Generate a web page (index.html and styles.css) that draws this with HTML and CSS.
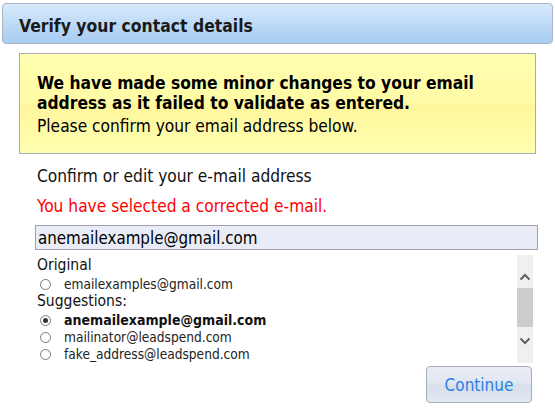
FILE: index.html
```html
<!DOCTYPE html>
<html>
<head>
<meta charset="utf-8">
<link rel="stylesheet" href="styles.css">
</head>
<body>
<div class="header">Verify your contact details</div>
<div class="notice">
  <div class="notice-bold">We have made some minor changes to your email address as it failed to validate as entered.</div>
  <div class="notice-text">Please confirm your email address below.</div>
</div>
<div class="content">
  <div class="label">Confirm or edit your e-mail address</div>
  <div class="error">You have selected a corrected e-mail.</div>
  <div class="input">anemailexample@gmail.com</div>
  <div class="listbox">
    <div class="list">
      <div class="group">Original</div>
      <div class="option first"><span class="radio"></span>emailexamples@gmail.com</div>
      <div class="group">Suggestions:</div>
      <div class="option first selected"><span class="radio checked"></span>anemailexample@gmail.com</div>
      <div class="option"><span class="radio"></span>mailinator@leadspend.com</div>
      <div class="option"><span class="radio"></span>fake_address@leadspend.com</div>
    </div>
    <div class="scrollbar">
      <svg class="arrow" width="16" height="12" viewBox="0 0 16 12"><path d="M3.5 8.5 L8 4 L12.5 8.5" fill="none" stroke="#606060" stroke-width="2"/></svg>
      <div class="track"><div class="thumb"></div></div>
      <svg class="arrow" width="16" height="12" viewBox="0 0 16 12"><path d="M3.5 3.5 L8 8 L12.5 3.5" fill="none" stroke="#606060" stroke-width="2"/></svg>
    </div>
  </div>
  <div class="actions">
    <div class="button">Continue</div>
  </div>
</div>
</body>
</html>
```
FILE: styles.css
```css
html, body {
  margin: 0;
  padding: 0;
  background: #ffffff;
}
body {
  font-family: "DejaVu Sans Condensed", "DejaVu Sans", sans-serif;
  color: #000000;
  width: 555px;
  height: 412px;
  overflow: hidden;
}
.header {
  margin: 3px 2px 0 2px;
  height: 34px;
  padding: 5px 0 0 16px;
  border: 1px solid #a9b6c8;
  border-radius: 4px;
  background: linear-gradient(#d8e9fb, #bcd9f6 55%, #a8ccf2);
  display: flex;
  align-items: center;
  font-weight: bold;
  font-size: 17.4px;
  line-height: 20px;
  color: #1a1a1a;
}
.notice {
  margin: 9px 19px 0 19px;
  height: 80px;
  border: 1px solid #a8a8b8;
  background: linear-gradient(#ffffb0, #fffba6 48%, #fff69c 52%, #ffffb0);
  padding: 19px 17px 0 17px;
  font-size: 17.2px;
  line-height: 19px;
}
.notice-bold {
  font-weight: bold;
  font-size: 17.3px;
  line-height: 20px;
}
.notice-text {
  margin-top: 4px;
}
.content {
  margin-left: 35px;
  width: 503px;
}
.label {
  margin-top: 12px;
  padding-left: 2px;
  font-size: 17.2px;
  line-height: 20px;
  color: #111111;
}
.error {
  margin-top: 10px;
  padding-left: 2px;
  font-size: 17.2px;
  line-height: 20px;
  color: #ff0000;
}
.input {
  margin-top: 9px;
  height: 23px;
  border: 1px solid #a0a0ae;
  background: #e9ecf6;
  padding-left: 2px;
  font-size: 16.8px;
  line-height: 24px;
}
.listbox {
  margin-top: 5px;
  height: 108px;
  display: flex;
  width: 498px;
}
.list {
  flex: 1;
  padding-top: 2px;
}
.group {
  padding-left: 2px;
  font-size: 15.5px;
  line-height: 17px;
  color: #111111;
}
.option {
  display: flex;
  align-items: center;
  font-size: 13.6px;
  line-height: 17px;
  color: #222222;
  padding-left: 5px;
}
.option.first {
  margin-top: 2px;
}
.option.selected {
  font-weight: bold;
  font-size: 14px;
  color: #111111;
}
.radio {
  width: 9px;
  height: 9px;
  border: 1px solid #7a7a7a;
  border-radius: 50%;
  margin-right: 13px;
  position: relative;
  background: #ffffff;
}
.radio.checked::after {
  content: "";
  position: absolute;
  left: 2px;
  top: 2px;
  width: 5px;
  height: 5px;
  border-radius: 50%;
  background: #333333;
}
.scrollbar {
  width: 16px;
  background: #f0f0f0;
  display: flex;
  flex-direction: column;
}
.arrow {
  display: block;
  margin-top: 16px;
}
.track {
  flex: 1;
  padding-top: 5px;
}
.thumb {
  height: 39px;
  background: #cdcdcd;
}
.scrollbar .arrow:last-child {
  margin-top: 0;
  margin-bottom: 16px;
}
.actions {
  display: flex;
  justify-content: flex-end;
  margin-top: 3px;
  padding-right: 6px;
}
.button {
  width: 104px;
  height: 35px;
  border: 1px solid #a8adb9;
  border-radius: 4px;
  background: linear-gradient(#e9edf6, #e2e7f1 45%, #d6dfec 55%, #e4e9f2);
  display: flex;
  align-items: center;
  justify-content: center;
  font-size: 17px;
  color: #2b7fe6;
}
```
